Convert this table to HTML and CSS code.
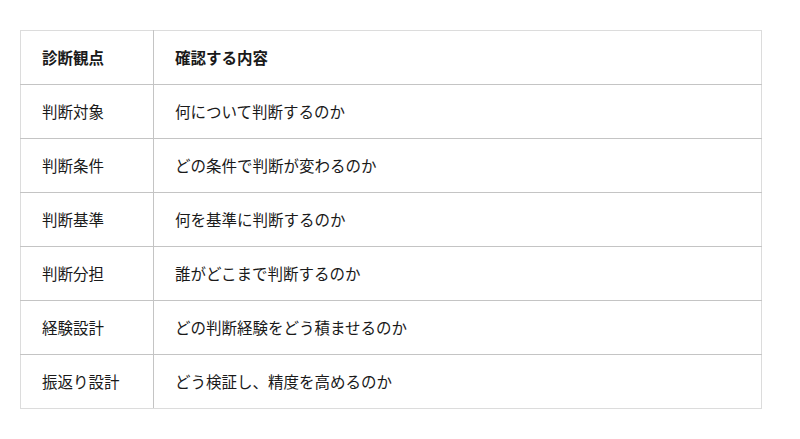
FILE: index.html
```html
<!DOCTYPE html>
<html lang="ja">
<head>
<meta charset="utf-8">
<link rel="stylesheet" href="styles.css">
</head>
<body>
<table class="diag">
  <thead>
    <tr><th class="c1">診断観点</th><th class="c2">確認する内容</th></tr>
  </thead>
  <tbody>
    <tr><td class="c1">判断対象</td><td class="c2">何について判断するのか</td></tr>
    <tr><td class="c1">判断条件</td><td class="c2">どの条件で判断が変わるのか</td></tr>
    <tr><td class="c1">判断基準</td><td class="c2">何を基準に判断するのか</td></tr>
    <tr><td class="c1">判断分担</td><td class="c2">誰がどこまで判断するのか</td></tr>
    <tr><td class="c1">経験設計</td><td class="c2">どの判断経験をどう積ませるのか</td></tr>
    <tr><td class="c1">振返り設計</td><td class="c2">どう検証し、精度を高めるのか</td></tr>
  </tbody>
</table>
</body>
</html>
```
FILE: styles.css
```css
html, body {
  margin: 0;
  padding: 0;
  background: #ffffff;
}
body {
  padding: 30px 38px 0 20px;
  font-family: "Noto Sans CJK JP", "Noto Sans", sans-serif;
  color: #1a1a1a;
}
.diag {
  width: 742px;
  border-collapse: collapse;
  border: 1px solid #dcdcdc;
  font-size: 15.5px;
}
.diag th, .diag td {
  height: 54px;
  padding: 0 0 2px 21px;
  text-align: left;
  vertical-align: middle;
  border-bottom: 1px solid #c4c4c4;
  box-sizing: border-box;
}
.diag tbody tr:last-child td {
  border-bottom: 1px solid #dcdcdc;
}
.diag th {
  font-weight: 700;
}
.diag td {
  font-weight: 400;
}
.diag .c1 {
  width: 133px;
  border-right: 1px solid #c4c4c4;
}
```
